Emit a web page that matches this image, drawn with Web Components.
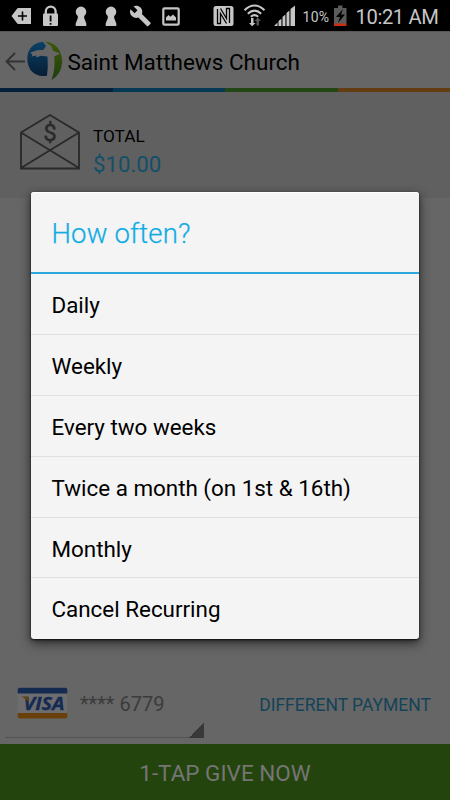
<!DOCTYPE html>
<html lang="en">
<head>
<meta charset="utf-8">
<title>Saint Matthews Church</title>
<style>
html,body{margin:0;height:100%;background:#666}
body{font-family:Roboto,"Liberation Sans",sans-serif;overflow:hidden}
</style>
</head>
<body>
<giving-screen></giving-screen>
<script>
function define(name, html) {
  const t = document.createElement('template');
  t.innerHTML = html;
  customElements.define(name, class extends HTMLElement {
    constructor() {
      super();
      this.attachShadow({mode: 'open'}).append(t.content.cloneNode(true));
    }
  });
}

define('status-bar', `
<style>
:host{display:flex;height:31px;background:#000;color:#c6c6c6;box-sizing:border-box;justify-content:space-between}
svg{display:block;flex:none}
.right{display:flex}
.pct{font-size:14px;line-height:34px;width:28px;white-space:nowrap;letter-spacing:.3px;text-indent:1px}
.time{font-size:20.2px;line-height:34px;width:94.500px;white-space:nowrap;letter-spacing:-.4px}
</style>
<svg width="190" height="31" viewBox="0 0 190 31" fill="#c6c6c6">
  <path d="M11.5 16 17 8.8Q17.6 8 18.5 8H31V24H18.500Q17.600 24 17 23.200Z"/>
  <path d="M22.500 11.500V20.500M18 16H27" stroke="#000" stroke-width="1.600"/>
  <path d="M45.800 15V11.500A4.900 4.900 0 0 1 55.600 11.500V15" fill="none" stroke="#c6c6c6" stroke-width="2.300"/>
  <rect x="43" y="13.500" width="15" height="12.500" rx="1"/>
  <path d="M50.600 15.500V21.500M50.600 23V24.800" stroke="#000" stroke-width="1.800"/>
  <path d="M77.500 15.800A5.300 5.300 0 1 1 84.500 15.800Q83.800 17 84.200 18L86.300 23.500V26H75.700V23.500L77.800 18Q78.200 17 77.500 15.800Z"/>
  <path d="M107.500 15.800A5.300 5.300 0 1 1 114.500 15.800Q113.800 17 114.200 18L116.300 23.500V26H105.700V23.500L107.800 18Q108.200 17 107.500 15.800Z"/>
  <path d="M150.400 23.400 141.900 14.900C142.800 12.700 142.300 10.100 140.500 8.300 138.600 6.400 135.800 6 133.500 7.100L137.500 11.100 134.600 14 130.500 10C129.500 12.300 129.900 15 131.800 16.900 133.600 18.700 136.200 19.200 138.400 18.300L146.900 26.800Q147.600 27.300 148.200 26.800L150.400 24.700Q151 24 150.400 23.400Z" transform="translate(0,-.8)"/>
  <rect x="163.300" y="8.300" width="15.400" height="16.400" rx="1.300" fill="none" stroke="#c6c6c6" stroke-width="2.200"/>
  <path d="M166 20.500V17.500L168.500 15 170.500 16.800 173 14.500 176 17.500V20.500Z"/>
</svg>
<div class="right">
<svg width="90" height="31" viewBox="212 0 90 31" fill="#c6c6c6">
  <rect x="213.500" y="6" width="20" height="20" rx="2.500"/>
  <path d="M217.500 9V23.500H220.500V13.500L226.500 23.500M229.500 23V8.500H226.500V18.500L220.500 8.500" fill="none" stroke="#000" stroke-width="1.300"/>
  <g fill="none" stroke="#c6c6c6" stroke-width="2.100">
    <path d="M244.500 10.200Q254.500 .8 264.500 10.200M247.800 13.700Q254.500 7.500 261.200 13.700M250.800 16.800Q254.500 13.500 258.200 16.800"/>
  </g>
  <path d="M251 18H253.500V23H255.500L252.200 26.300 249 23H251Z"/>
  <path d="M256.500 25.500V21H254.500L257.800 17.500 261 21H259V25.500Z" fill="#555"/>
  <path d="M274 26 277.500 22.500V26ZM278.500 26V21L281.400 18.700V26ZM282.500 26V17L285.400 14.500V26ZM286.500 26V13L289.400 10.500V26ZM290.500 26V9L295 5.500V26Z"/>
</svg>
<span class="pct">10%</span>
<svg width="26" height="31" viewBox="330 0 26 31">
  <path d="M334 8H338V5.500H342.500V8H346.500V24H334Z" fill="#5b5b5b"/>
  <path d="M343 9 336 17H340L338 23 345 14.500H341Z" fill="#000"/>
  <rect x="334" y="23.500" width="12.500" height="2.500" fill="#c92f0e"/>
</svg>
<span class="time">10:21 AM</span>
</div>`);

define('app-header', `
<style>
:host{display:block;height:60.500px;background:#666;color:#000}
.bar{height:57px;display:flex;align-items:center;border-top:1px solid #585858;box-sizing:border-box}
svg{display:block;width:66px;height:56px;flex:none}
.t{font-size:22.500px;padding:4px 0 0 1.500px;white-space:nowrap}
.s{display:grid;grid-template-columns:112.500px 112.500px 112.500px 112.500px;height:3.500px}
</style>
<div class="bar">
<svg viewBox="0 32 66 56">
  <defs><linearGradient id="b" x1="0" y1="0" x2="0" y2="1"><stop offset="0" stop-color="#0b4265"/><stop offset="1" stop-color="#061d35"/></linearGradient>
  <linearGradient id="g" x1="0" y1="0" x2="0" y2="1"><stop offset="0" stop-color="#3e5906"/><stop offset="1" stop-color="#1e3d10"/></linearGradient></defs>
  <path d="M25 61.500H6.500M15 53 6.500 61.500 15 70" fill="none" stroke="#333" stroke-width="1.900"/>
  <path d="M28.300 52Q32 43 43 41.800L46 46 43.500 49.700 37 50.200 30 52.800 32.500 54.500 31.500 56.500 36.500 55.500 36 57.500 41 55.800 47.500 56.500Q48.300 67 47 75.700Q37 77.500 30.500 70Q25.500 62 28.300 52Z" fill="url(#b)"/>
  <path d="M45 41.600Q52 42.300 57 47Q61.800 52 62.200 62Q61.500 74 51.500 80Q55.500 69 54.200 56.500L60 53.500 53 50.800 51.500 46.500Z" fill="url(#g)"/>
</svg>
<span class="t">Saint Matthews Church</span></div>
<div class="s"><i style="background:#04203a"></i><i style="background:#053853"></i><i style="background:#234615"></i><i style="background:#633c12"></i></div>`);

define('total-band', `
<style>
:host{display:flex;height:106px;background:#606060;box-sizing:border-box}
svg{display:block;flex:none}
div{padding:34px 0 0 13px;white-space:nowrap}
p{margin:0}
.l{font-size:17.200px;line-height:20px;color:#000}
.a{font-size:22.200px;line-height:32px;color:#134f68;padding-top:2px}
.d{font-size:24px;font-family:Roboto,sans-serif}
</style>
<svg width="80" height="106" viewBox="0 91.500 80 106" fill="none" stroke="#292929" stroke-width="1.800">
  <path d="M21 132 50 114.500 79 132V168H21ZM21 132 79 167.500M79 132 21 167.500"/>
  <text class="d" x="50" y="140.500" text-anchor="middle" fill="#292929" stroke="#292929" stroke-width=".4">$</text>
</svg>
<div><p class="l"><slot name="label"></slot></p><p class="a"><slot></slot></p></div>`);

define('payment-row', `
<style>
:host{display:flex;height:64px;justify-content:space-between;box-sizing:border-box;padding-left:5px;color:#3b3b3b}
.sel{width:199px;height:58px;display:flex;position:relative;border-bottom:1px solid #535353;box-sizing:border-box}
.sel:after{content:"";position:absolute;right:0;bottom:-1px;width:15px;height:15px;background:linear-gradient(135deg,transparent 50%,#383838 50%)}
svg{display:block;margin:7px 0 0 12px;flex:none}
.n{font-size:20px;line-height:24px;padding:12px 0 0 12px;white-space:nowrap}
.o{font-size:17.500px;line-height:20px;color:#134358;padding:15px 19px 0 0;white-space:nowrap}
</style>
<div class="sel">
<svg width="51" height="32" viewBox="0 0 51 32">
  <rect x=".7" y=".7" width="49.600" height="31" rx="2" fill="#6d6d70"/>
  <path d="M.7 6.500V2.700Q.7 .7 2.700 .7H48.300Q50.300 .7 50.300 2.700V6.500Z" fill="#142a51"/>
  <path d="M.7 26V29.500Q.7 31.500 2.700 31.500H48.300Q50.300 31.500 50.300 29.500V26Z" fill="#694009"/>
  <text x="6.500" y="23" font-family="Open Sans,sans-serif" font-size="18.500" font-weight="700" font-style="italic" fill="#142a51" stroke="#142a51" stroke-width=".3" textLength="41" lengthAdjust="spacingAndGlyphs">VISA</text>
  <path d="M4 9.500H9Q11 9.500 11.300 12L12 16Q9 11 4 9.500Z" fill="#694009"/>
</svg>
<span class="n"><slot></slot></span></div>
<span class="o"><slot name="other"></slot></span>`);

define('give-button', `
<style>
:host{display:block;height:56px;background:#24440d;color:#757575;font-size:22.500px;line-height:59px;text-align:center;white-space:nowrap;box-sizing:border-box}
</style><slot></slot>`);

define('choice-item', `
<style>
:host{display:block;height:60.900px;box-sizing:border-box;border-bottom:1.500px solid #e0e0e0;padding-left:20.500px;font-size:22.400px;line-height:63px;color:#000;white-space:nowrap}
:host(:last-of-type){border-bottom:0}
</style><slot></slot>`);

define('choice-dialog', `
<style>
:host{display:block;position:absolute;left:31px;top:192px;width:388px;height:447px;background:#f4f4f4;border-radius:3px;box-sizing:border-box;box-shadow:0 1px 2px rgba(0,0,0,.75),0 3px 8px rgba(0,0,0,.5),0 5px 14px rgba(0,0,0,.25),inset 0 1px 0 #fff}
h2{margin:0;height:80px;padding-left:20.500px;font-weight:300;font-size:27.500px;line-height:84px;color:#10ace4;-webkit-text-stroke:.25px #10ace4;letter-spacing:.15px;white-space:nowrap}
hr{margin:0;border:0;height:2px;background:#2ca9dc}
</style>
<h2><slot name="title"></slot></h2><hr><slot></slot>`);

define('giving-screen', `
<style>
:host{display:flex;flex-direction:column;position:relative;width:450px;height:800px;background:#666;overflow:hidden}
.fill{flex:1}
</style>
<status-bar></status-bar>
<app-header></app-header>
<total-band><span slot="label">TOTAL</span>$10.00</total-band>
<div class="fill"></div>
<payment-row>**** 6779<span slot="other">DIFFERENT PAYMENT</span></payment-row>
<give-button>1-TAP GIVE NOW</give-button>
<choice-dialog><span slot="title">How often?</span>
<choice-item>Daily</choice-item><choice-item>Weekly</choice-item><choice-item>Every two weeks</choice-item><choice-item>Twice a month (on 1st &amp; 16th)</choice-item><choice-item>Monthly</choice-item><choice-item>Cancel Recurring</choice-item>
</choice-dialog>`);
</script>
</body>
</html>
